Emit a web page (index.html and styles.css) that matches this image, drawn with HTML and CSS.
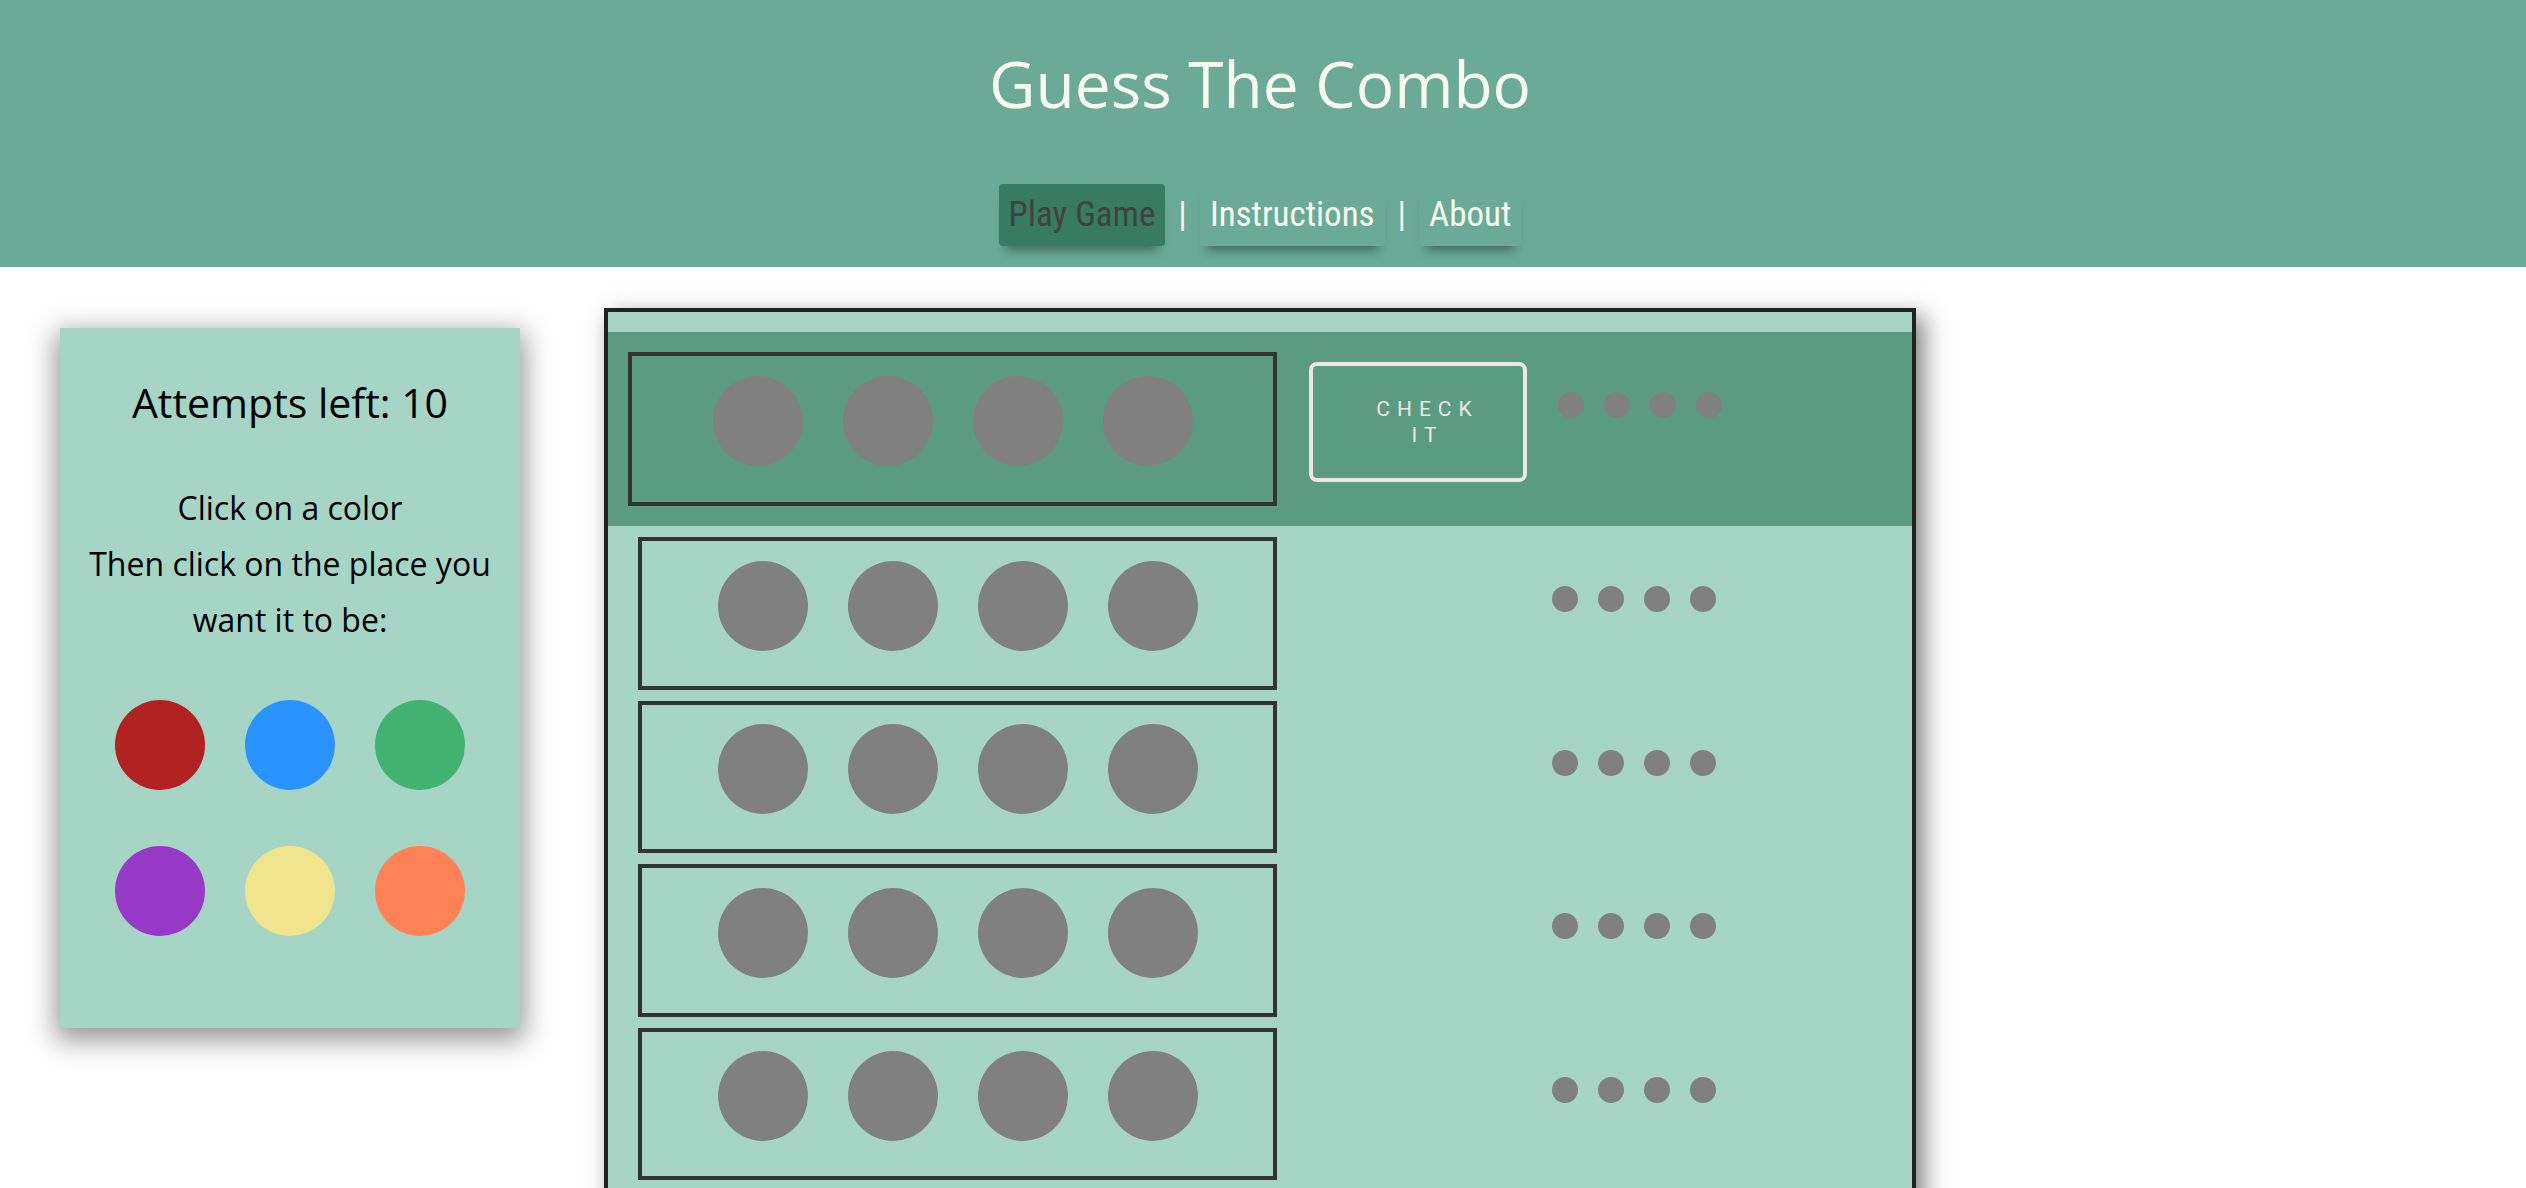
FILE: index.html
```html
<!DOCTYPE html>
<html lang="en">
<head>
<meta charset="utf-8">
<title>Guess The Combo</title>
<link rel="stylesheet" href="styles.css">
</head>
<body>
<header class="site-header">
  <h1 class="site-title">Guess The Combo</h1>
  <nav class="site-nav">
    <a class="nav-link nav-link--active" href="#">Play Game</a>
    <span class="nav-sep">|</span>
    <a class="nav-link" href="#">Instructions</a>
    <span class="nav-sep">|</span>
    <a class="nav-link" href="#">About</a>
  </nav>
</header>

<main class="game">
  <aside class="panel">
    <h2 class="panel-title">Attempts left: 10</h2>
    <p class="panel-text">Click on a color<br>Then click on the place you want it to be:</p>
    <div class="palette">
      <span class="swatch swatch--red"></span>
      <span class="swatch swatch--blue"></span>
      <span class="swatch swatch--green"></span>
      <span class="swatch swatch--purple"></span>
      <span class="swatch swatch--yellow"></span>
      <span class="swatch swatch--orange"></span>
    </div>
  </aside>

  <section class="board">
    <div class="current-row">
      <div class="combo combo--current">
        <span class="peg"></span><span class="peg"></span><span class="peg"></span><span class="peg"></span>
      </div>
      <button class="check-btn" type="button">CHECK IT</button>
      <div class="hints hints--current">
        <span class="hint"></span><span class="hint"></span><span class="hint"></span><span class="hint"></span>
      </div>
    </div>

    <div class="rows">
      <div class="row">
        <div class="combo"><span class="peg"></span><span class="peg"></span><span class="peg"></span><span class="peg"></span></div>
        <div class="hints"><span class="hint"></span><span class="hint"></span><span class="hint"></span><span class="hint"></span></div>
      </div>
      <div class="row">
        <div class="combo"><span class="peg"></span><span class="peg"></span><span class="peg"></span><span class="peg"></span></div>
        <div class="hints"><span class="hint"></span><span class="hint"></span><span class="hint"></span><span class="hint"></span></div>
      </div>
      <div class="row">
        <div class="combo"><span class="peg"></span><span class="peg"></span><span class="peg"></span><span class="peg"></span></div>
        <div class="hints"><span class="hint"></span><span class="hint"></span><span class="hint"></span><span class="hint"></span></div>
      </div>
      <div class="row">
        <div class="combo"><span class="peg"></span><span class="peg"></span><span class="peg"></span><span class="peg"></span></div>
        <div class="hints"><span class="hint"></span><span class="hint"></span><span class="hint"></span><span class="hint"></span></div>
      </div>
      <div class="row">
        <div class="combo"><span class="peg"></span><span class="peg"></span><span class="peg"></span><span class="peg"></span></div>
        <div class="hints"><span class="hint"></span><span class="hint"></span><span class="hint"></span><span class="hint"></span></div>
      </div>
      <div class="row">
        <div class="combo"><span class="peg"></span><span class="peg"></span><span class="peg"></span><span class="peg"></span></div>
        <div class="hints"><span class="hint"></span><span class="hint"></span><span class="hint"></span><span class="hint"></span></div>
      </div>
    </div>
  </section>
</main>
</body>
</html>
```

FILE: styles.css
```css
* {
  box-sizing: border-box;
}

html, body {
  margin: 0;
  padding: 0;
  background: #ffffff;
}

body {
  font-family: "Open Sans", "Noto Sans", sans-serif;
  color: #000;
}

/* ---------- header ---------- */
.site-header {
  background: #6aaa96;
  padding: 52px 6px 21px 0;
  display: flex;
  flex-direction: column;
  align-items: center;
}

.site-title {
  margin: 0;
  font-family: "Open Sans", "Noto Sans", sans-serif;
  font-weight: 500;
  font-size: 64px;
  line-height: 64px;
  color: #f7f9ef;
}

.site-nav {
  margin-top: 68px;
  display: flex;
  align-items: center;
  font-family: "Roboto Condensed", "Roboto", sans-serif;
  font-stretch: 80%;
  font-size: 35px;
  line-height: 62px;
}

.nav-link {
  display: block;
  height: 62px;
  padding: 0 10px;
  color: #f7f9ef;
  text-decoration: none;
  border-radius: 4px;
  box-shadow: 0 11px 10px -7px rgba(0, 0, 0, 0.4);
}

.nav-link--active {
  background: #387a62;
  color: #3e4340;
}

.nav-sep {
  color: #f7f9ef;
  margin: 0 13px;
}

/* ---------- layout ---------- */
.game {
  display: flex;
  align-items: flex-start;
}

/* ---------- side panel ---------- */
.panel {
  width: 460px;
  margin: 61px 0 0 60px;
  padding: 46px 0 92px;
  background: #a6d5c5;
  text-align: center;
  box-shadow: 0 8px 26px 4px rgba(0, 0, 0, 0.42);
}

.panel-title {
  margin: 0;
  font-size: 41px;
  font-weight: 500;
  line-height: 56px;
}

.panel-text {
  margin: 50px 0 0;
  padding: 0 20px;
  font-size: 32px;
  line-height: 56px;
}

.palette {
  margin: 52px auto 0;
  width: 350px;
  display: grid;
  grid-template-columns: repeat(3, 90px);
  column-gap: 40px;
  row-gap: 56px;
}

.swatch {
  width: 90px;
  height: 90px;
  border-radius: 50%;
}

.swatch--red { background: #b22222; }
.swatch--blue { background: #2a93fd; }
.swatch--green { background: #42b272; }
.swatch--purple { background: #9639c6; }
.swatch--yellow { background: #f0e48e; }
.swatch--orange { background: #fe8157; }

/* ---------- board ---------- */
.board {
  width: 1312px;
  margin: 41px 0 0 84px;
  padding-top: 20px;
  background: #a6d5c5;
  border: 4px solid #212322;
  box-shadow: 8px 8px 22px rgba(0, 0, 0, 0.5);
}

.current-row {
  display: flex;
  align-items: flex-start;
  background: #5b9b83;
  padding: 20px 0 20px 20px;
}

.combo {
  width: 639px;
  height: 152.5px;
  border: 4px solid #333333;
  padding-top: 19.5px;
  display: flex;
  justify-content: center;
  align-items: flex-start;
  gap: 40px;
}

.combo--current {
  width: 649px;
  height: 154px;
  padding-top: 20px;
}

.peg {
  width: 90px;
  height: 90px;
  border-radius: 50%;
  background: #808080;
}

.check-btn {
  width: 218px;
  height: 120px;
  margin: 10px 0 0 32px;
  padding: 0 40px 0 59px;
  background: transparent;
  border: 4px solid #ede7e3;
  border-radius: 8px;
  color: #ede7e3;
  font-family: "Roboto", sans-serif;
  font-size: 21px;
  line-height: 26px;
  letter-spacing: 7px;
  text-align: center;
}

.hints {
  display: flex;
  gap: 20px;
  margin: 49px 0 0 275px;
}

.hints--current {
  margin: 40px 0 0 31px;
}

.hint {
  width: 26px;
  height: 26px;
  border-radius: 50%;
  background: #808080;
}

.rows {
  padding: 11px 0 11px 30px;
  display: flex;
  flex-direction: column;
  gap: 11px;
}

.row {
  display: flex;
  align-items: flex-start;
}
```
